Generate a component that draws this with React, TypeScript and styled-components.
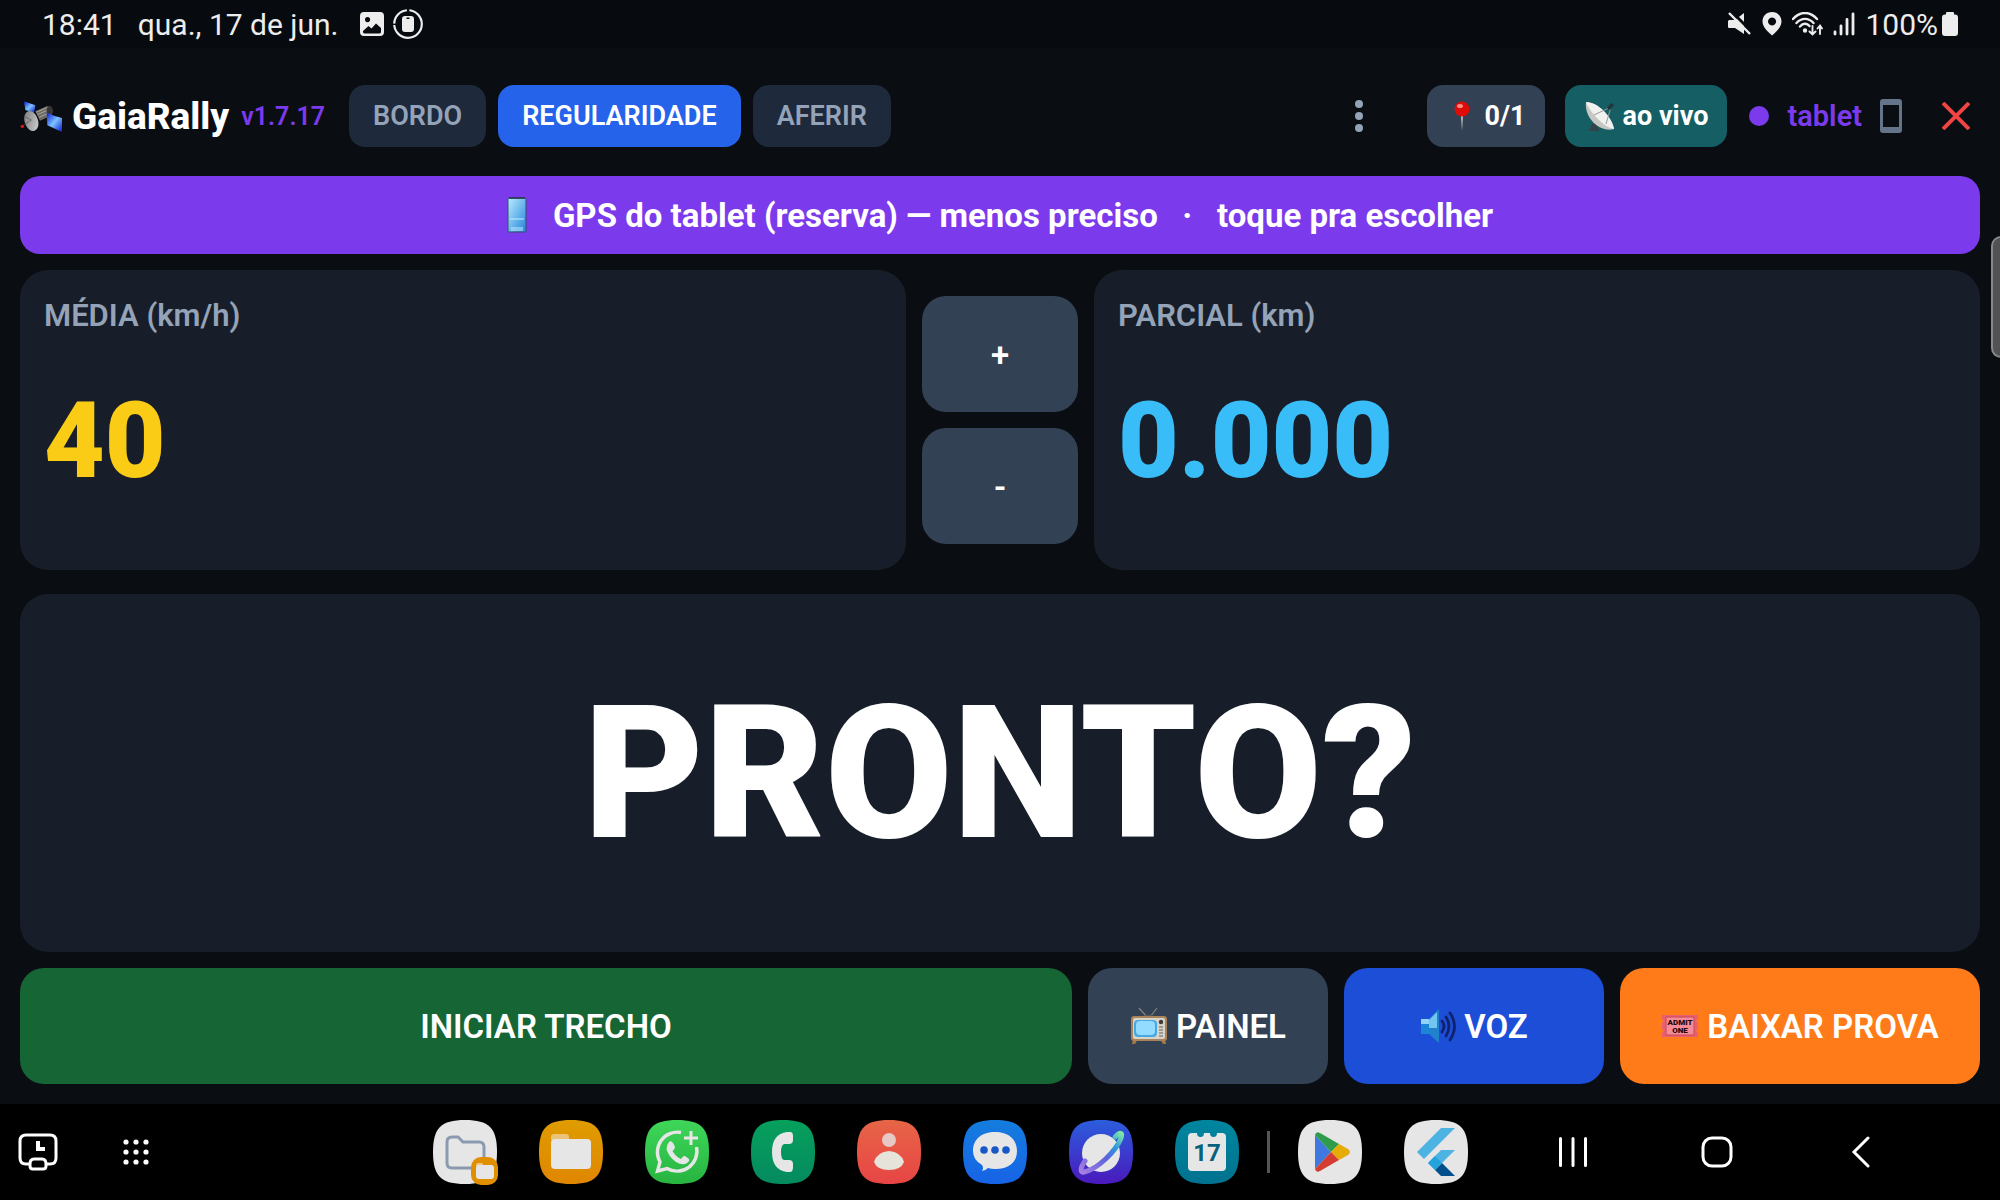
import React from 'react'
import styled, { createGlobalStyle } from 'styled-components'

const GlobalStyle = createGlobalStyle`
    * {
        box-sizing: border-box;
    }

    body {
        margin: 0;
        background: #0a0e13;
        color: white;
        font-family: Roboto, "Liberation Sans", sans-serif;
    }

    button {
        border: 0;
        padding: 0;
        background: none;
        color: inherit;
        font-family: inherit;
        cursor: pointer;
    }

    svg {
        display: block;
        flex: none;
    }
`

const Screen = styled.div`
    display: flex;
    flex-direction: column;
    min-height: 100vh;
`

const StatusBar = styled.div`
    display: flex;
    align-items: center;
    justify-content: space-between;
    height: 48px;
    padding: 0 42px;
    background: #070a0f;
    color: #ededed;
    font-size: 30px;
`

const StatusGroup = styled.div`
    display: flex;
    align-items: center;
    gap: ${(p: { gap: number }) => p.gap}px;
`

const StatusDate = styled.span`
    padding: 0 12px;
`

const Header = styled.header`
    display: flex;
    align-items: center;
    height: 128px;
    padding: 8px 20px 0;
`

const Brand = styled.h1`
    display: flex;
    align-items: center;
    gap: 10px;
    margin: 0;
    font-size: 37px;
    font-weight: 800;
`

const Version = styled.span`
    margin: 0 24px 0 12px;
    color: #7c3aed;
    font-size: 25px;
    font-weight: 600;
`

const Tabs = styled.nav`
    display: flex;
    gap: 12px;
    flex: 1;
`

const Tab = styled.button`
    height: 62px;
    padding: 0 24px;
    border-radius: 16px;
    background: ${(p: { $active?: boolean }) => p.$active ? '#2563eb' : '#1e293b'};
    color: ${(p: { $active?: boolean }) => p.$active ? 'white' : '#94a3b8'};
    font-size: 27px;
    font-weight: 600;
`

const MenuButton = styled.button`
    display: flex;
    justify-content: center;
    width: 56px;
    margin-right: 40px;
`

const Chip = styled.button`
    display: flex;
    align-items: center;
    gap: 7px;
    height: 62px;
    margin-right: 20px;
    padding: 0 19px;
    border-radius: 16px;
    background: ${(p: { $color: string }) => p.$color};
    font-size: 27px;
    font-weight: 700;
`

const Source = styled.button`
    display: flex;
    align-items: center;
    gap: 18px;
    margin-right: 40px;
    padding-left: 2px;
    color: #7c3aed;
    font-size: 29px;
    font-weight: 600;
`

const Dot = styled.span`
    width: 20px;
    height: 20px;
    border-radius: 50%;
    background: #7c3aed;
`

const CloseButton = styled.button`
    padding-right: 10px;
`

const Content = styled.main`
    display: flex;
    flex-direction: column;
    flex: 1;
    padding: 0 20px 20px;
`

const Banner = styled.button`
    display: flex;
    align-items: center;
    justify-content: center;
    gap: 26px;
    height: 78px;
    margin-bottom: 16px;
    border-radius: 20px;
    background: #7c3aed;
    font-size: 33px;
    font-weight: 700;
`

const Readings = styled.div`
    display: grid;
    grid-template-columns: 1fr 156px 1fr;
    gap: 16px;
    align-items: center;
    margin-bottom: 24px;
`

const Card = styled.section`
    height: 300px;
    padding: 28px 24px;
    border-radius: 28px;
    background: #171e29;
`

const CardLabel = styled.h2`
    margin: 0;
    color: #94a3b8;
    font-size: 31px;
    font-weight: 600;
    line-height: 36px;
`

const CardValue = styled.div`
    margin-top: 46px;
    color: ${(p: { $color: string }) => p.$color};
    font-size: 105px;
    font-weight: 900;
    line-height: 124px;
`

const Stepper = styled.div`
    display: grid;
    gap: 16px;
`

const Action = styled.button`
    display: flex;
    align-items: center;
    justify-content: center;
    gap: 8px;
    height: 116px;
    border-radius: 24px;
    background: ${(p: { $color: string }) => p.$color};
    font-size: 33px;
    font-weight: 600;
`

const Message = styled.section`
    display: flex;
    align-items: center;
    justify-content: center;
    flex: 1;
    margin-bottom: 16px;
    border-radius: 28px;
    background: #171e29;
    font-size: 185px;
    font-weight: 900;
    line-height: 1;
`

const Actions = styled.div`
    display: grid;
    grid-template-columns: 1fr 240px 260px 360px;
    gap: 16px;
`

const Handle = styled.div`
    position: fixed;
    top: 236px;
    right: -2px;
    width: 11px;
    height: 122px;
    border: 2px solid #888;
    border-radius: 10px 0 0 10px;
    background: #515253;
`

const NavBar = styled.nav`
    display: grid;
    grid-template-columns: 1fr auto 1fr;
    align-items: center;
    height: 96px;
    padding: 0 117px 0 18px;
    background: black;
`

const NavGroup = styled.div`
    display: flex;
    align-items: center;
    justify-content: ${(p: { $end?: boolean }) => p.$end ? 'flex-end' : 'flex-start'};
    gap: ${(p: { $end?: boolean }) => p.$end ? 112 : 65}px;
    padding-right: 6px;
`

const Dock = styled.div`
    display: flex;
    align-items: center;
    gap: 42px;
`

const Divider = styled.span`
    width: 3px;
    height: 42px;
    margin: 0 -14px;
    background: #555;
`

const SQUIRCLE = 'M32 0C56 0 64 8 64 32S56 64 32 64 0 56 0 32 8 0 32 0Z'

interface AppIconProps {
    label: string
    colors: [string, string]
    children: React.ReactNode
}

const AppIcon = ({ label, colors, children }: AppIconProps) => {
    const id = `bg-${label.replace(' ', '-')}`
    return (
        <button aria-label={label}>
            <svg width="64" height="64" viewBox="0 0 64 64" overflow="visible">
                <defs>
                    <linearGradient id={id} x1="0" y1="0" x2="0" y2="1">
                        <stop offset="0" stopColor={colors[0]}/>
                        <stop offset="1" stopColor={colors[1]}/>
                    </linearGradient>
                </defs>
                <path d={SQUIRCLE} fill={`url(#${id})`}/>
                {children}
            </svg>
        </button>
    )
}

const ImageIcon = () => (
    <svg width="24" height="24" viewBox="0 0 24 24">
        <path fillRule="evenodd" fill="#ededed" d="M4 0H20Q24 0 24 4V20Q24 24 20 24H4Q0 24 0 20V4Q0 0 4 0ZM7.500 5A2.600 2.600 0 1 0 7.600 5ZM3 20Q3 21.500 5 21.500H19Q21 21.500 21 20V16L16 11.500 11.500 16.500 8.500 14 3 19Z"/>
    </svg>
)

const BatteryCircleIcon = () => (
    <svg width="30" height="30" viewBox="0 0 30 30" fill="none">
        <circle cx="15" cy="15" r="13.800" stroke="#ededed" strokeWidth="2.200" strokeDasharray="42 1.500 20 2.500 20.700 0"/>
        <path fillRule="evenodd" fill="#ededed" d="M12 7H18Q21 7 21 10V20Q21 23 18 23H12Q9 23 9 20V10Q9 7 12 7ZM13.500 8.500V10H16.500V8.500Z"/>
    </svg>
)

const MuteIcon = () => (
    <svg width="24" height="24" viewBox="0 0 24 24">
        <path d="M1 8H7L16 1V22L7 16H1Q0 16 0 15V9Z" fill="#ededed"/>
        <path d="M3 -1L24 20" stroke="#070a0f" strokeWidth="3"/>
        <path d="M1 1L22 22" stroke="#ededed" strokeWidth="2.400"/>
    </svg>
)

const PlaceIcon = () => (
    <svg width="20" height="24" viewBox="0 0 20 24">
        <path fillRule="evenodd" fill="#ededed" d="M10 0C15.500 0 19.500 4 19.500 9.500 19.500 15 14 20 10 23.500 6 20 .500 15 .500 9.500 .500 4 4.500 0 10 0ZM10 5.500A4 4 0 1 0 10.100 5.500Z"/>
    </svg>
)

const WifiIcon = () => (
    <svg width="31" height="24" viewBox="0 0 31 24" fill="none" stroke="#ededed" strokeWidth="2.400" strokeLinecap="round">
        <path d="M1 7C8 -1 18 -1 25 7M4.500 11C9.500 5.500 16.500 5.500 21.500 11M8 14.500C11 11 15 11 17.500 14"/>
        <path d="M20.500 14V22M17.500 19.500L20.500 22.500 23.500 19.500M28 22V14M25.500 16.500L28 13.500 30 16.500" strokeWidth="1.900"/>
        <circle cx="13" cy="18.500" r="1" fill="#ededed"/>
    </svg>
)

const SignalIcon = () => (
    <svg width="22" height="24" viewBox="0 0 22 24" stroke="#ededed" strokeWidth="2.800" strokeLinecap="round">
        <path d="M2 20V22M8 14V22M14 7.500V22M20 2V22"/>
    </svg>
)

const BatteryIcon = () => (
    <svg width="16" height="24" viewBox="0 0 16 24">
        <path d="M5 0H11Q12 0 12 1V2.500H13Q16 2.500 16 5.500V21Q16 24 13 24H3Q0 24 0 21V5.500Q0 2.500 3 2.500H4V1Q4 0 5 0Z" fill="#ededed"/>
    </svg>
)

const SatelliteIcon = () => (
    <svg width="42" height="32" viewBox="0 0 126 96">
        <defs>
            <linearGradient id="panel" x1="0" y1="0" x2="1" y2="1">
                <stop offset="0" stopColor="#0a18d8"/>
                <stop offset=".5" stopColor="#7cc4ff"/>
                <stop offset="1" stopColor="#0d16cf"/>
            </linearGradient>
            <linearGradient id="dish" x1="0" y1="0" x2="1" y2="1">
                <stop offset="0" stopColor="#777"/>
                <stop offset="1" stopColor="#d5d5d5"/>
            </linearGradient>
        </defs>
        <path d="M12 4L46 16 42 38 16 30Z" fill="url(#panel)"/>
        <path d="M46 34L80 19Q94 16 98 32 98 43 90 48L60 62Z" fill="#6d6a66"/>
        <path d="M48 37L83 22M52 44L91 27M57 52L94 36" stroke="#a9a6a0" strokeWidth="3"/>
        <ellipse cx="89" cy="31" rx="9" ry="12" fill="#383634"/>
        <path d="M80 38L102 47 126 54V96L82 76Z" fill="url(#panel)"/>
        <ellipse cx="34" cy="63" rx="20" ry="31" fill="url(#dish)" transform="rotate(-18 34 63)"/>
        <path d="M34 60L7 78M34 60L14 50" stroke="#504d49" strokeWidth="2"/>
        <circle cx="7" cy="79" r="5" fill="#e51616"/>
    </svg>
)

const PinIcon = () => (
    <svg width="32" height="32" viewBox="0 0 32 32">
        <path d="M15 15H17L16 31Z" fill="#c8c8c8"/>
        <circle cx="16" cy="9" r="7.500" fill="#df0b06"/>
        <ellipse cx="14" cy="6" rx="3" ry="2" fill="#ff8a80"/>
    </svg>
)

const DishIcon = () => (
    <svg width="32" height="32" viewBox="0 0 32 32">
        <path d="M8 24L5 31H15L13 23Z" fill="#34404a"/>
        <path d="M2 2C14 2 28 17 30 29 17 33 0 19 2 2Z" fill="#c6c6c4"/>
        <path d="M2 2C14 2 28 17 30 29 22 28 7 15 2 2Z" fill="#f1f1ef"/>
        <path d="M10 15L27 7M27 7L22 24" stroke="#999" strokeWidth="1"/>
        <path d="M23 8L27 3 30 5 26 10Z" fill="#26323d"/>
    </svg>
)

const PhoneEmoji = () => (
    <svg width="20" height="36" viewBox="0 0 20 36">
        <defs>
            <linearGradient id="glass" x1="0" y1="0" x2="1" y2="1">
                <stop offset="0" stopColor="#b9ecff"/>
                <stop offset="1" stopColor="#2484da"/>
            </linearGradient>
        </defs>
        <rect x="1" y="1" width="18" height="34" rx="1" fill="url(#glass)" stroke="#34506b" strokeWidth="1"/>
        <path d="M3 22H17M4 31H16M4 33H16" stroke="#c4edff" strokeWidth="1" strokeDasharray="14"/>
        <path d="M2 1H18" stroke="#263646" strokeWidth="1.500"/>
    </svg>
)

const TabletIcon = () => (
    <svg width="22" height="34" viewBox="0 0 22 34">
        <path fillRule="evenodd" d="M3 0H19Q22 0 22 3V31Q22 34 19 34H3Q0 34 0 31V3Q0 0 3 0ZM3 6V28H19V6Z" fill="#64748b"/>
    </svg>
)

const TvIcon = () => (
    <svg width="38" height="38" viewBox="0 0 38 38">
        <path d="M9 1L17 10M27 1L20 10" stroke="#8a8178" strokeWidth="1.200"/>
        <path d="M3 32L2 37H5L8 32ZM30 32L33 37H36L35 32Z" fill="#a37843"/>
        <path d="M14 9Q19 6 24 9Z" fill="#555"/>
        <rect x="1" y="9" width="36" height="25" rx="3" fill="#a9835a"/>
        <rect x="3" y="11" width="32" height="21" rx="2" fill="#d8d4cb"/>
        <rect x="4" y="13" width="23" height="17" rx="4" fill="#48a8e2"/>
        <rect x="6" y="14" width="19" height="14" rx="4" fill="#93dcff"/>
        <circle cx="31" cy="15" r="2.200" fill="#3f3b37"/>
        <path d="M29 20H33M29 23H33M29 26H33M29 29H33" stroke="#66625d" strokeWidth="1.200"/>
    </svg>
)

const SpeakerIcon = () => (
    <svg width="36" height="36" viewBox="0 0 36 36" fill="none">
        <path d="M1 11H9V26H1Z" fill="#1b86d8"/>
        <path d="M1 11H9V16H1Z" fill="#8fd4fb"/>
        <path d="M9 11L19 1V35L9 26Z" fill="#2081cd"/>
        <path d="M9 12L17 4V20L9 20Z" fill="#74c4f2"/>
        <path d="M22 13Q26 18 22 24M26 9Q32 18 26 28M30 5Q39 18 30 32" stroke="#10226b" strokeWidth="2.800" strokeLinecap="round"/>
    </svg>
)

const TicketLine = styled.text`
    fill: #260609;
    font-size: 8px;
    font-weight: 900;
    text-anchor: middle;
`

const TicketIcon = () => (
    <svg width="38" height="38" viewBox="0 0 38 38">
        <path d="M1 8H37V12L35 14 37 16V22L35 24 37 26V30H1V26L3 24 1 22V16L3 14 1 12Z" fill="#e9606f"/>
        <path d="M5 10H33V28H5Z" fill="#f58b96" stroke="#c94757" strokeWidth="1"/>
        <TicketLine x="19" y="18">ADMIT</TicketLine>
        <TicketLine x="19" y="26">ONE</TicketLine>
    </svg>
)

const App = () => (
    <Screen>
        <GlobalStyle/>
        <StatusBar>
            <StatusGroup gap={9}>
                <span>18:41</span>
                <StatusDate>qua., 17 de jun.</StatusDate>
                <ImageIcon/>
                <BatteryCircleIcon/>
            </StatusGroup>
            <StatusGroup gap={10}>
                <MuteIcon/>
                <PlaceIcon/>
                <WifiIcon/>
                <SignalIcon/>
                <StatusGroup gap={4}>
                    <span>100%</span>
                    <BatteryIcon/>
                </StatusGroup>
            </StatusGroup>
        </StatusBar>

        <Header>
            <Brand><SatelliteIcon/>GaiaRally</Brand>
            <Version>v1.7.17</Version>
            <Tabs>
                <Tab>BORDO</Tab>
                <Tab $active>REGULARIDADE</Tab>
                <Tab>AFERIR</Tab>
            </Tabs>
            <MenuButton aria-label="Menu">
                <svg width="8" height="32" viewBox="0 0 8 32" fill="#94a3b8">
                    <circle cx="4" cy="4" r="4"/>
                    <circle cx="4" cy="16" r="4"/>
                    <circle cx="4" cy="28" r="4"/>
                </svg>
            </MenuButton>
            <Chip $color="#334155"><PinIcon/>0/1</Chip>
            <Chip $color="#155e63"><DishIcon/>ao vivo</Chip>
            <Source><Dot/>tablet<TabletIcon/></Source>
            <CloseButton aria-label="Fechar">
                <svg width="28" height="28" viewBox="0 0 28 28">
                    <path d="M1 1L27 27M27 1L1 27" stroke="#ef4444" strokeWidth="4"/>
                </svg>
            </CloseButton>
        </Header>

        <Content>
            <Banner>
                <PhoneEmoji/>
                <span>GPS do tablet (reserva) — menos preciso &nbsp;&nbsp;·&nbsp;&nbsp; toque pra escolher</span>
            </Banner>
            <Readings>
                <Card>
                    <CardLabel>MÉDIA (km/h)</CardLabel>
                    <CardValue $color="#facc15">40</CardValue>
                </Card>
                <Stepper>
                    <Action $color="#334155">+</Action>
                    <Action $color="#334155">-</Action>
                </Stepper>
                <Card>
                    <CardLabel>PARCIAL (km)</CardLabel>
                    <CardValue $color="#38bdf8">0.000</CardValue>
                </Card>
            </Readings>
            <Message>PRONTO?</Message>
            <Actions>
                <Action $color="#166534">INICIAR TRECHO</Action>
                <Action $color="#334155"><TvIcon/>PAINEL</Action>
                <Action $color="#1d4ed8"><SpeakerIcon/>VOZ</Action>
                <Action $color="#ff7b1a"><TicketIcon/>BAIXAR PROVA</Action>
            </Actions>
        </Content>

        <NavBar>
            <NavGroup>
                <button aria-label="Recentes">
                    <svg width="40" height="38" viewBox="0 0 40 38" fill="none" stroke="white" strokeWidth="3">
                        <path d="M11 31H8Q2 31 2 25V8Q2 2 8 2H32Q38 2 38 8V25Q38 31 32 31H29"/>
                        <path d="M16 26H24Q28 26 28 31V33Q28 36 25 36H15Q12 36 12 33V31Q12 26 16 26Z"/>
                        <path d="M20 8V16H27" strokeWidth="4"/>
                    </svg>
                </button>
                <button aria-label="Aplicativos">
                    <svg width="26" height="26" viewBox="0 0 26 26" fill="white">
                        {[3, 13, 23].map(y => [3, 13, 23].map(x => <circle key={`${x}-${y}`} cx={x} cy={y} r="2.600"/>))}
                    </svg>
                </button>
            </NavGroup>

            <Dock>
                <AppIcon label="Pasta" colors={['#e6e6e6', '#e6e6e6']}>
                    <path d="M19 17H25L30 22H46Q51 22 51 27V43Q51 48 46 48H19Q14 48 14 43V22Q14 17 19 17Z" fill="none" stroke="#8a9bb0" strokeWidth="3"/>
                    <rect x="38" y="37" width="27" height="28" rx="10" fill="#e08f00"/>
                    <path d="M43 45Q43 43 45 43H49L51 46H43Z" fill="#efc680"/>
                    <rect x="43" y="45" width="18" height="14" rx="3" fill="#e6e6e6"/>
                </AppIcon>
                <AppIcon label="Arquivos" colors={['#df9c00', '#e08600']}>
                    <path d="M12 20V17Q12 14 15 14H27Q30 14 30 17V20Z" fill="#ebc377"/>
                    <rect x="12" y="19" width="40" height="30" rx="4" fill="#e6e6e6"/>
                </AppIcon>
                <AppIcon label="WhatsApp" colors={['#3ed659', '#27b440']}>
                    <path d="M36 12.500A20 20 0 0 0 15 42L12.500 51 22 48.500A20 20 0 0 0 51.500 27" fill="none" stroke="#e6e6e6" strokeWidth="3.400"/>
                    <path d="M24 22Q26 20 28 23L30 27Q30 29 27.500 31 31 37 36 39 38 35.500 40 36L44 39Q45 41 42 43 38 46 31 42 23 36 21.500 29 21.500 25 24 22Z" fill="#e6e6e6"/>
                    <path d="M46 11V25M39 18H53" stroke="#e6e6e6" strokeWidth="3"/>
                </AppIcon>
                <AppIcon label="Telefone" colors={['#07a05c', '#048a5f']}>
                    <path d="M36 12H39Q42 12 42 16V20Q42 24 38 24H33Q30 25 30 32T33 40H38Q42 40 42 44V47Q42 52 39 52H36Q21 50 21 32T36 12Z" fill="#e6e6e6"/>
                </AppIcon>
                <AppIcon label="Contatos" colors={['#e76546', '#e74545']}>
                    <circle cx="32" cy="20" r="7" fill="#e6c8c5"/>
                    <path d="M32 31Q44 32 47 42 44 50 32 50T17 42Q20 32 32 31Z" fill="#e6e3da"/>
                </AppIcon>
                <AppIcon label="Mensagens" colors={['#147dde', '#1763e6']}>
                    <path d="M32 12C45 12 54 19 54 31S45 49 32 49Q28 49 25 48 22 51 19 51 21 48 19 45 10 40 10 31C10 19 19 12 32 12Z" fill="#e6e6e6"/>
                    <circle cx="21" cy="30" r="3.800" fill="#1757c7"/>
                    <circle cx="32" cy="30" r="3.800" fill="#1757c7"/>
                    <circle cx="43" cy="30" r="3.800" fill="#1757c7"/>
                </AppIcon>
                <AppIcon label="Internet" colors={['#2b5edc', '#4a19bd']}>
                    <defs>
                        <linearGradient id="ring" x1="0" y1="1" x2="1" y2="0">
                            <stop offset="0" stopColor="#a77fe0"/>
                            <stop offset=".5" stopColor="#5a62db"/>
                            <stop offset=".75" stopColor="#2f9bdc"/>
                            <stop offset="1" stopColor="#7fe8a4"/>
                        </linearGradient>
                    </defs>
                    <circle cx="32" cy="33" r="19" fill="#e6e6e6"/>
                    <path d="M46 17C51 12 54 12 52 18 47 31 29 49 15 52 11 53 11 48 16 41" fill="none" stroke="url(#ring)" strokeWidth="5" strokeLinecap="round"/>
                </AppIcon>
                <AppIcon label="Calendário" colors={['#00869f', '#00728f']}>
                    <path d="M17 13H22Q22 17 25.500 17T29 13H35Q35 17 38.500 17T42 13H47Q51 13 51 17V47Q51 51 47 51H17Q13 51 13 47V17Q13 13 17 13Z" fill="#e6e6e6"/>
                    <text x="32" y="41" fontSize="24" fontWeight="700" textAnchor="middle" fill="#07617c">17</text>
                </AppIcon>
                <Divider/>
                <AppIcon label="Play Store" colors={['#e6e6e6', '#e6e6e6']}>
                    <path d="M17 15V49L33 32Z" fill="#3f78df"/>
                    <path d="M17 15Q18 11 22 13L41 24 33 32Z" fill="#2f9c4c"/>
                    <path d="M41 24L50 29Q54 32 50 35L41 40 33 32Z" fill="#e5ac05"/>
                    <path d="M17 49Q18 53 22 51L41 40 33 32Z" fill="#d53c31"/>
                </AppIcon>
                <AppIcon label="Flutter" colors={['#e6e6e6', '#e6e6e6']}>
                    <path d="M37 8H51L20 39 13 32ZM37 30H51L31 50 24 43Z" fill="#4db3e3"/>
                    <path d="M31 50L38 43 51 56H37Z" fill="#034f8c"/>
                    <path d="M31 36L38 43 31 50 24 43Z" fill="#25a3dd"/>
                </AppIcon>
            </Dock>

            <NavGroup $end>
                <button aria-label="Visão geral">
                    <svg width="32" height="30" viewBox="-2 0 32 30" stroke="white" strokeWidth="3" strokeLinecap="round">
                        <path d="M1.500 1.500V28.500M14 1.500V28.500M26.500 1.500V28.500"/>
                    </svg>
                </button>
                <button aria-label="Início">
                    <svg width="32" height="32" viewBox="0 0 32 32" fill="none" stroke="white" strokeWidth="3">
                        <rect x="2" y="2" width="28" height="28" rx="9"/>
                    </svg>
                </button>
                <button aria-label="Voltar">
                    <svg width="32" height="32" viewBox="-7 0 32 32" fill="none" stroke="white" strokeWidth="3" strokeLinecap="round">
                        <path d="M16 2L2 16 16 30"/>
                    </svg>
                </button>
            </NavGroup>
        </NavBar>
        <Handle/>
    </Screen>
)

export default App
